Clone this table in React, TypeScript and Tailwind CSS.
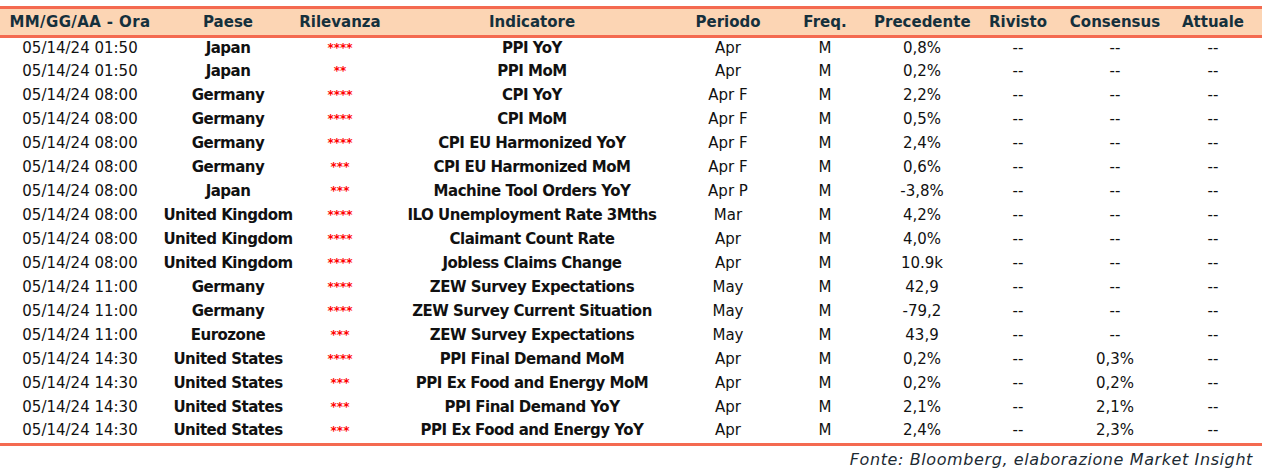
const rows: [string, string, string, string, string, string, string, string][] = [
  ["05/14/24 01:50", "Japan", "****", "PPI YoY", "Apr", "0,8%", "--", "--"],
  ["05/14/24 01:50", "Japan", "**", "PPI MoM", "Apr", "0,2%", "--", "--"],
  ["05/14/24 08:00", "Germany", "****", "CPI YoY", "Apr F", "2,2%", "--", "--"],
  ["05/14/24 08:00", "Germany", "****", "CPI MoM", "Apr F", "0,5%", "--", "--"],
  ["05/14/24 08:00", "Germany", "****", "CPI EU Harmonized YoY", "Apr F", "2,4%", "--", "--"],
  ["05/14/24 08:00", "Germany", "***", "CPI EU Harmonized MoM", "Apr F", "0,6%", "--", "--"],
  ["05/14/24 08:00", "Japan", "***", "Machine Tool Orders YoY", "Apr P", "-3,8%", "--", "--"],
  ["05/14/24 08:00", "United Kingdom", "****", "ILO Unemployment Rate 3Mths", "Mar", "4,2%", "--", "--"],
  ["05/14/24 08:00", "United Kingdom", "****", "Claimant Count Rate", "Apr", "4,0%", "--", "--"],
  ["05/14/24 08:00", "United Kingdom", "****", "Jobless Claims Change", "Apr", "10.9k", "--", "--"],
  ["05/14/24 11:00", "Germany", "****", "ZEW Survey Expectations", "May", "42,9", "--", "--"],
  ["05/14/24 11:00", "Germany", "****", "ZEW Survey Current Situation", "May", "-79,2", "--", "--"],
  ["05/14/24 11:00", "Eurozone", "***", "ZEW Survey Expectations", "May", "43,9", "--", "--"],
  ["05/14/24 14:30", "United States", "****", "PPI Final Demand MoM", "Apr", "0,2%", "--", "0,3%"],
  ["05/14/24 14:30", "United States", "***", "PPI Ex Food and Energy MoM", "Apr", "0,2%", "--", "0,2%"],
  ["05/14/24 14:30", "United States", "***", "PPI Final Demand YoY", "Apr", "2,1%", "--", "2,1%"],
  ["05/14/24 14:30", "United States", "***", "PPI Ex Food and Energy YoY", "Apr", "2,4%", "--", "2,3%"],
];

const headers = [
  "MM/GG/AA - Ora",
  "Paese",
  "Rilevanza",
  "Indicatore",
  "Periodo",
  "Freq.",
  "Precedente",
  "Rivisto",
  "Consensus",
  "Attuale",
];

const widths = [160, 136, 88, 296, 96, 98, 96, 96, 98, 98];

export default function App() {
  return (
    <div className="w-[1262px] h-[469px] bg-white pt-[6px] font-['DejaVu_Sans',sans-serif] text-[#111]">
      <table className="w-[1262px] table-fixed border-collapse text-[15px] leading-none">
        <colgroup>
          {widths.map((w, i) => (
            <col key={i} style={{ width: w }} />
          ))}
        </colgroup>
        <thead>
          <tr className="h-[29px] bg-[#fcd5b4] border-y-[3px] border-[#f46a50]">
            {headers.map((h, i) => (
              <th
                key={h}
                className={`text-center font-bold text-[#15303c] whitespace-nowrap ${
                  i === 0 ? "tracking-[0.4px]" : ""
                }`}
              >
                {h}
              </th>
            ))}
          </tr>
        </thead>
        <tbody className="border-b-[3px] border-[#f46a50]">
          {rows.map((r, i) => (
            <tr key={i} className="h-[24px] text-center">
              <td className="whitespace-nowrap pb-[2px]">{r[0]}</td>
              <td className="font-bold whitespace-nowrap tracking-[-0.5px] pb-[2px]">{r[1]}</td>
              <td className="align-top pt-[4px] text-[12px] font-bold text-[#ff0000]">{r[2]}</td>
              <td className="font-bold whitespace-nowrap tracking-[-0.5px] pb-[2px]">{r[3]}</td>
              <td className="pb-[2px]">{r[4]}</td>
              <td className="pb-[2px]">M</td>
              <td className="pb-[2px]">{r[5]}</td>
              <td className="pb-[2px]">{r[6]}</td>
              <td className="pb-[2px]">{r[7]}</td>
              <td className="pb-[2px]">--</td>
            </tr>
          ))}
        </tbody>
      </table>
      <div className="pr-[9px] pt-[2px] text-right text-[16px] tracking-[0.6px] italic text-[#1c2a33]">
        Fonte: Bloomberg, elaborazione Market Insight
      </div>
    </div>
  );
}
